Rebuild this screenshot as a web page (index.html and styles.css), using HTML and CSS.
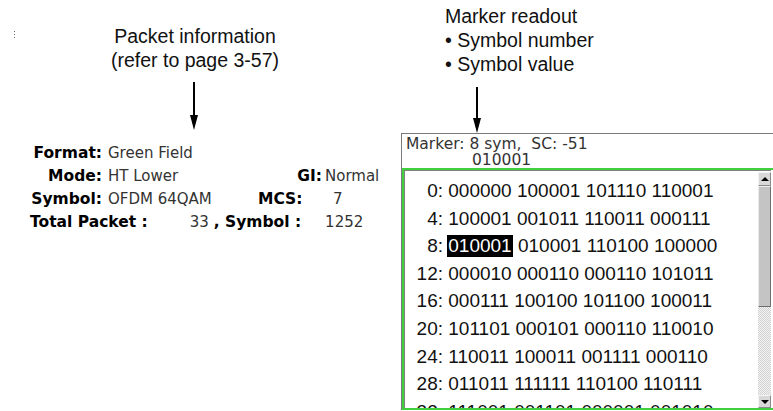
FILE: index.html
```html
<!DOCTYPE html>
<html lang="en">
<head>
    <meta charset="UTF-8">
    <meta name="viewport" content="width=device-width, initial-scale=1.0">
    <title>Packet Information and Marker Readout</title>
    <link rel="stylesheet" href="styles.css">
</head>
<body>
    <div class="page">
        <section class="packet">
            <span class="stray-mark"></span>
            <p class="callout">Packet information<br>(refer to page 3-57)</p>
            <svg class="arrow arrow-packet" viewBox="0 0 12 48" width="12" height="48">
                <line x1="6" y1="0" x2="6" y2="36" stroke="#000" stroke-width="2"/>
                <polygon points="2,33 10,33 6,48" fill="#000"/>
            </svg>

            <div class="info">
                <span class="label">Format:</span>
                <span class="value">Green Field</span>
                <span></span>
                <span></span>

                <span class="label">Mode:</span>
                <span class="value">HT Lower</span>
                <span class="label">GI:</span>
                <span class="value value-2">Normal</span>

                <span class="label">Symbol:</span>
                <span class="value">OFDM 64QAM</span>
                <span class="label label-mcs">MCS:</span>
                <span class="value value-2 value-mcs">7</span>
            </div>
            <div class="totals">
                <span class="label">Total Packet :</span>
                <span class="value total-count">33</span>
                <span class="label total-sym">, Symbol :</span>
                <span class="value total-sym-count">1252</span>
            </div>
        </section>

        <section class="readout">
            <p class="callout callout-list">Marker readout<br>• Symbol number<br>• Symbol value</p>
            <svg class="arrow arrow-readout" viewBox="0 0 12 46" width="12" height="46">
                <line x1="6" y1="0" x2="6" y2="34" stroke="#000" stroke-width="2"/>
                <polygon points="2,31 10,31 6,46" fill="#000"/>
            </svg>

            <div class="marker-panel">
                <p class="marker-text">Marker: 8 sym,&nbsp; SC: -51<br><span class="marker-value">010001</span></p>

                <div class="data-box">
                    <div class="data-list">
                        <div class="row"><span class="idx">0:</span> 000000 100001 101110 110001</div>
                        <div class="row"><span class="idx">4:</span> 100001 001011 110011 000111</div>
                        <div class="row"><span class="idx">8:</span> <span class="hl">010001</span> 010001 110100 100000</div>
                        <div class="row"><span class="idx">12:</span> 000010 000110 000110 101011</div>
                        <div class="row"><span class="idx">16:</span> 000111 100100 101100 100011</div>
                        <div class="row"><span class="idx">20:</span> 101101 000101 000110 110010</div>
                        <div class="row"><span class="idx">24:</span> 110011 100011 001111 000110</div>
                        <div class="row"><span class="idx">28:</span> 011011 111111 110100 110111</div>
                        <div class="row"><span class="idx">32:</span> 111001 001101 000001 001010</div>
                    </div>
                    <div class="scrollbar">
                        <div class="sb-btn"><span class="tri tri-up"></span></div>
                        <div class="sb-thumb"></div>
                        <div class="sb-track"></div>
                        <div class="sb-btn"><span class="tri tri-down"></span></div>
                    </div>
                </div>
            </div>
        </section>
    </div>
</body>
</html>
```

FILE: styles.css
```css
body {
    margin: 0;
    background: #fff;
    font-family: "Liberation Sans", Arial, sans-serif;
    color: #000;
    overflow: hidden;
}
.page {
    display: grid;
    grid-template-columns: 390px 1fr;
    width: 773px;
    height: 411px;
}

/* callouts */
.callout {
    margin: 0;
    font-size: 19.5px;
    line-height: 24px;
    color: #111;
}
.arrow {
    display: block;
}

/* left: packet information */
.packet {
    position: relative;
    padding-top: 24px;
}
.packet .callout {
    text-align: center;
}
.stray-mark {
    position: absolute;
    left: 14px;
    top: 31px;
    width: 1px;
    height: 7px;
    background: repeating-linear-gradient(#666 0 1px, transparent 1px 3px);
}
.arrow-packet {
    margin: 10px 0 0 188px;
}
.info {
    display: grid;
    grid-template-columns: 72px 136px 72px auto;
    column-gap: 6px;
    margin: 12px 0 0 30px;
    line-height: 23px;
}
.label {
    font-family: "DejaVu Sans", Verdana, sans-serif;
    font-weight: bold;
    font-size: 15.5px;
    text-align: right;
    color: #000;
}
.value {
    font-family: "DejaVu Sans", Verdana, sans-serif;
    font-size: 15px;
    color: #333;
}
.value-2 {
    margin-left: -3px;
}
.label-mcs {
    justify-self: start;
    margin-left: 8px;
}
.value-mcs {
    padding-left: 8px;
}
.totals {
    display: flex;
    margin-left: 30px;
    line-height: 23px;
}
.total-count {
    width: 61px;
    text-align: right;
}
.total-sym {
    margin-left: 5px;
}
.total-sym-count {
    margin-left: 24px;
}

/* right: marker readout */
.callout-list {
    padding: 4px 0 0 55px;
}
.arrow-readout {
    margin: 11px 0 0 81px;
}
.marker-panel {
    margin-left: 11px;
    border-top: 1px solid #7a7a7a;
    border-left: 1px solid #7a7a7a;
}
.marker-text {
    margin: 0;
    padding: 2px 0 0 4px;
    font-family: "DejaVu Sans", Verdana, sans-serif;
    font-size: 15.5px;
    line-height: 16px;
    color: #333;
}
.marker-value {
    margin-left: 66px;
}
.data-box {
    display: flex;
    width: 373px;
    height: 242px;
    box-sizing: border-box;
    border: 2px solid #3fcf3f;
    background: #fff;
    overflow: hidden;
}
.data-list {
    flex: 1;
    padding-top: 6px;
    border-top: 1px solid #808080;
    border-left: 1px solid #808080;
    overflow: hidden;
    font-size: 19px;
    line-height: 27.6px;
    white-space: nowrap;
    color: #111;
}
.idx {
    display: inline-block;
    width: 38px;
    text-align: right;
}
.hl {
    display: inline-block;
    padding: 0 1px;
    margin-left: -1px;
    line-height: 22px;
    background: #000;
    color: #fff;
}

/* scrollbar */
.scrollbar {
    display: flex;
    flex-direction: column;
    width: 13px;
    padding-top: 1px;
    border-top: 1px solid #808080;
    margin-right: 2px;
}
.sb-btn {
    display: flex;
    align-items: center;
    justify-content: center;
    height: 14px;
    box-sizing: border-box;
    background: #d8d8d8;
    border: 1px solid;
    border-color: #f4f4f4 #8a8a8a #8a8a8a #f4f4f4;
}
.sb-btn:last-child {
    height: 13px;
}
.tri {
    width: 0;
    height: 0;
    border-left: 4px solid transparent;
    border-right: 4px solid transparent;
}
.tri-up {
    border-bottom: 4px solid #000;
}
.tri-down {
    border-top: 4px solid #000;
}
.sb-thumb {
    height: 121px;
    box-sizing: border-box;
    background: #c4c4c4;
    border: 1px solid;
    border-color: #ececec #6e6e6e #6e6e6e #ececec;
}
.sb-track {
    height: 88px;
    background: repeating-conic-gradient(#cfcfcf 0 25%, #f6f6f6 0 50%) 0 0 / 2px 2px;
}
```
